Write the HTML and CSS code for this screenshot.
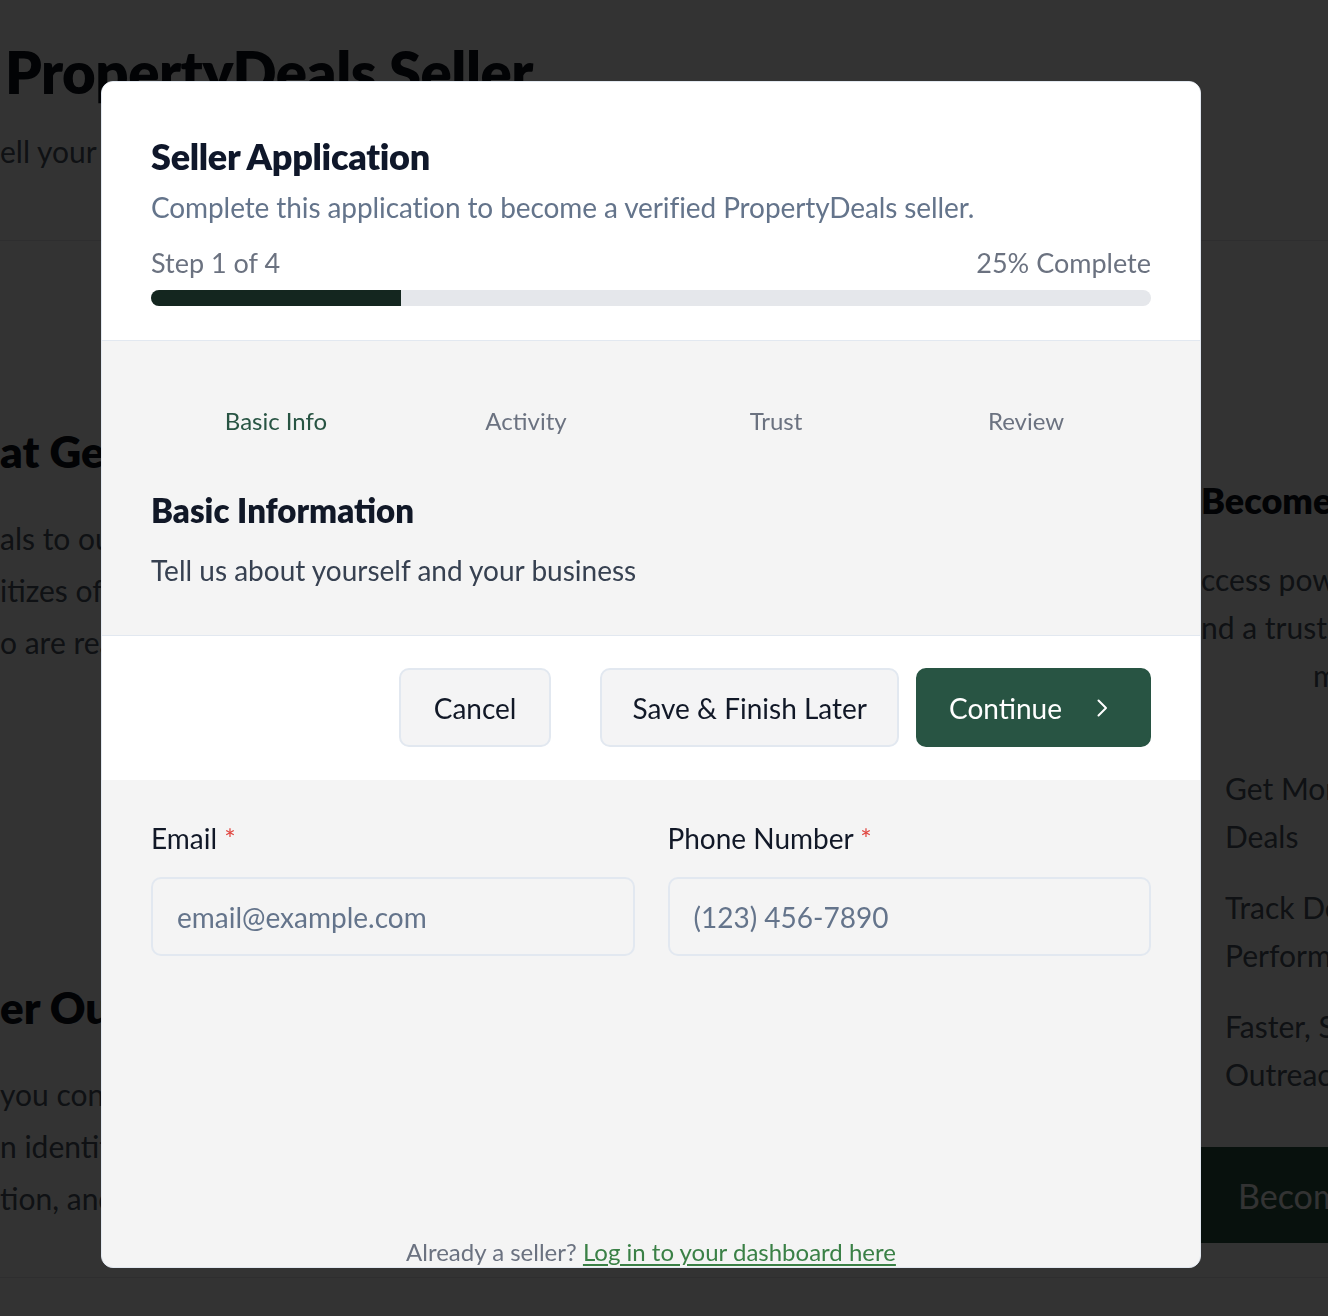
FILE: index.html
```html
<!DOCTYPE html>
<html lang="en">
<head>
<meta charset="utf-8">
<title>Seller Application</title>
<link rel="stylesheet" href="styles.css">
</head>
<body>
<div class="bg-page">
  <header class="hero">
    <h1 class="hero-title">PropertyDeals Seller</h1>
    <p class="hero-sub">ell your deals to verified buyers</p>
  </header>
  <main class="bg-grid">
    <section class="bg-left">
      <h2 class="bg-h2 first">at Getting Verified Means</h2>
      <p class="bg-line">als to our buyer network</p>
      <p class="bg-line">itizes offers from sellers</p>
      <p class="bg-line">o are ready to close deals</p>
      <h2 class="bg-h2 second">er Outreach Standards</h2>
      <p class="bg-line">you connect with buyers</p>
      <p class="bg-line">n identity checks and</p>
      <p class="bg-line">tion, and compliance</p>
    </section>
    <aside class="bg-right">
      <h3 class="bg-h3">Become a Verified Seller</h3>
      <p class="bg-line">ccess powerful tools</p>
      <p class="bg-line">nd a trusted network</p>
      <p class="bg-line center">m</p>
      <ul class="bg-list">
        <li>Get More<br>Deals</li>
        <li>Track Deal<br>Performance</li>
        <li>Faster, Smarter<br>Outreach</li>
      </ul>
      <div class="bg-btn">Become a Seller</div>
    </aside>
  </main>
  <footer class="bg-footer"></footer>
</div>

<div class="overlay">
  <div class="modal">
    <div class="modal-head">
      <h2 class="title">Seller Application</h2>
      <p class="subtitle">Complete this application to become a verified PropertyDeals seller.</p>
      <div class="progress-row">
        <span>Step 1 of 4</span>
        <span>25% Complete</span>
      </div>
      <div class="track"><div class="fill" style="width:25%"></div></div>
    </div>

    <div class="section-one">
      <nav class="tabs">
        <span class="tab active">Basic Info</span>
        <span class="tab">Activity</span>
        <span class="tab">Trust</span>
        <span class="tab">Review</span>
      </nav>
      <h3 class="sec-title">Basic Information</h3>
      <p class="sec-sub">Tell us about yourself and your business</p>
    </div>

    <div class="actions">
      <button class="btn btn-light cancel">Cancel</button>
      <button class="btn btn-light save">Save &amp; Finish Later</button>
      <button class="btn btn-primary">Continue
        <svg class="chev" viewBox="0 0 12 20" width="12" height="20" fill="none" stroke="currentColor" stroke-width="2" stroke-linecap="round" stroke-linejoin="round"><path d="M2.5 2.5 L10 10 L2.5 17.5"/></svg>
      </button>
    </div>

    <div class="section-two">
      <div class="fields">
        <div class="field">
          <label class="label">Email <span class="req">*</span></label>
          <div class="input">email@example.com</div>
        </div>
        <div class="field">
          <label class="label">Phone Number <span class="req">*</span></label>
          <div class="input">(123) 456-7890</div>
        </div>
      </div>
      <p class="already">Already a seller? <a href="#" class="link">Log in to your dashboard here</a></p>
    </div>
  </div>
</div>
</body>
</html>
```

FILE: styles.css
```css
* { box-sizing: border-box; }
html, body { margin: 0; padding: 0; }
body {
  width: 1328px;
  height: 1316px;
  overflow: hidden;
  background: #ffffff;
  font-family: "Lato", "Liberation Sans", sans-serif;
  color: #111827;
}

/* ---------- background page ---------- */
.bg-page { width: 1328px; height: 1316px; overflow: hidden; }
.hero { height: 241px; border-bottom: 1px solid #e5e7eb; padding-top: 40px; }
.hero-title {
  margin: 0 0 0 5px;
  font-size: 58px;
  line-height: 64px;
  font-weight: 800;
  color: #0b0f19;
  white-space: nowrap;
  letter-spacing: -0.5px;
}
.hero-sub {
  margin: 27px 0 0 0;
  font-size: 30px;
  line-height: 40px;
  color: #4b5563;
  white-space: nowrap;
}
.bg-grid { display: grid; grid-template-columns: 1201px 1fr; height: 1036px; }
.bg-left, .bg-right { overflow: hidden; white-space: nowrap; }
.bg-h2 {
  margin: 0;
  font-size: 44px;
  line-height: 52px;
  font-weight: 800;
  color: #0b0f19;
}
.bg-h2.first { margin-top: 184px; }
.bg-h2.second { margin-top: 313px; }
.bg-line {
  margin: 0;
  font-size: 30px;
  line-height: 52px;
  color: #4b5563;
}
.bg-h2 + .bg-line { margin-top: 35px; }
.bg-h3 {
  margin: 237px 0 0 0;
  font-size: 36px;
  line-height: 44px;
  font-weight: 800;
  color: #0b0f19;
}
.bg-right .bg-line { line-height: 48px; }
.bg-h3 + .bg-line { margin-top: 33px; }
.bg-line.center { padding-left: 112px; }
.bg-list {
  list-style: none;
  margin: 65px 0 0 0;
  padding: 0 0 0 24px;
  display: flex;
  flex-direction: column;
  gap: 23px;
}
.bg-list li { font-size: 30px; line-height: 48px; color: #4b5563; }
.bg-btn {
  margin-top: 49px;
  height: 96px;
  background: #285443;
  color: #ffffff;
  font-size: 34px;
  display: flex;
  align-items: center;
  padding-left: 37px;
}
.bg-footer { border-top: 1px solid #e5e7eb; height: 40px; }

/* ---------- overlay + modal ---------- */
.overlay {
  position: fixed;
  inset: 0;
  background: rgba(0, 0, 0, 0.8);
  padding: 81px 0 0 101px;
}
.modal {
  width: 1100px;
  height: 1187px;
  background: #f4f4f4;
  border: 1px solid #e2e8f0;
  border-radius: 12px;
  overflow: hidden;
  display: flex;
  flex-direction: column;
}
.modal-head {
  background: #ffffff;
  padding: 54px 49px 34px 49px;
  border-bottom: 1px solid #e2e8f0;
}
.title {
  margin: 0;
  font-size: 36px;
  line-height: 40px;
  font-weight: 800;
  color: #0f172a;
  letter-spacing: -0.3px;
}
.subtitle {
  margin: 13px 0 0 0;
  font-size: 28px;
  line-height: 36px;
  color: #64748b;
  letter-spacing: -0.1px;
}
.progress-row {
  margin-top: 20px;
  display: flex;
  justify-content: space-between;
  font-size: 27px;
  line-height: 36px;
  color: #6b7280;
}
.track {
  margin-top: 9px;
  height: 16px;
  border-radius: 8px;
  background: #e5e7eb;
  overflow: hidden;
}
.fill { height: 100%; background: #14261f; }

.section-one { padding: 64px 49px 47px 49px; }
.tabs { display: grid; grid-template-columns: repeat(4, 1fr); }
.tab {
  text-align: center;
  font-size: 24px;
  line-height: 32px;
  color: #6b7280;
}
.tab.active { color: #285443; }
.sec-title {
  margin: 53px 0 0 0;
  font-size: 33px;
  line-height: 40px;
  font-weight: 800;
  color: #111827;
}
.sec-sub {
  margin: 22px 0 0 0;
  font-size: 28px;
  line-height: 36px;
  color: #374151;
}

.actions {
  background: #ffffff;
  border-top: 1px solid #e2e8f0;
  padding: 32px 49px 33px 49px;
  display: flex;
  justify-content: flex-end;
  gap: 17px;
}
.btn {
  height: 79px;
  border-radius: 10px;
  font-family: "Lato", "Liberation Sans", sans-serif;
  font-size: 28px;
  padding: 0 33px;
  display: flex;
  align-items: center;
  cursor: pointer;
}
.btn-light { background: #f4f4f5; border: 2px solid #e2e8f0; color: #111827; }
.cancel { margin-right: 32px; }
.save { padding: 0 30px; }
.btn-primary {
  background: #285443;
  border: 2px solid #285443;
  color: #ffffff;
  padding: 0 41px 0 31px;
  gap: 34px;
}
.chev { display: block; }

.section-two {
  flex: 1;
  padding: 40px 49px 0 49px;
  display: flex;
  flex-direction: column;
}
.fields { display: grid; grid-template-columns: 1fr 1fr; gap: 33px; }
.label {
  display: block;
  font-size: 28px;
  line-height: 36px;
  color: #111827;
}
.req { color: #e0453f; font-size: 27px; }
.input {
  margin-top: 20px;
  height: 79px;
  border: 2px solid #e2e8f0;
  border-radius: 10px;
  background: #f4f4f4;
  padding-left: 24px;
  display: flex;
  align-items: center;
  font-size: 28px;
  color: #64748b;
}
.already {
  margin: auto 0 0 0;
  text-align: center;
  font-size: 24px;
  line-height: 30px;
  color: #6b7280;
}
.link { color: #3a8046; text-decoration: underline; text-underline-offset: 3px; }
```
